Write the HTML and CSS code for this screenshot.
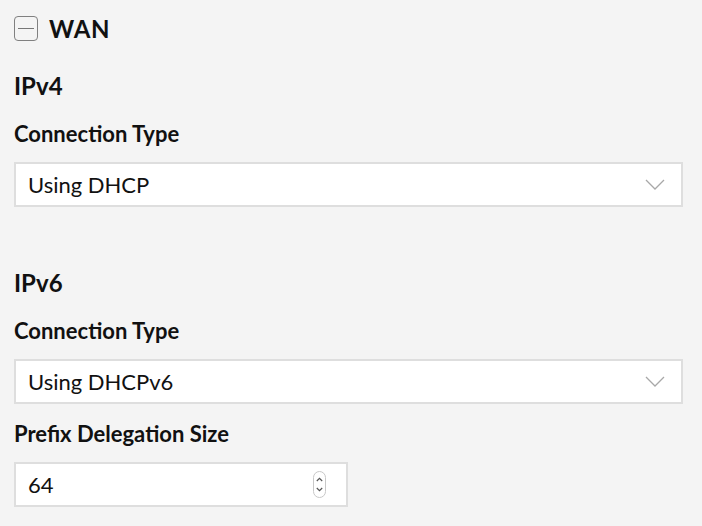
FILE: index.html
```html
<!DOCTYPE html>
<html>
<head>
<meta charset="utf-8">
<link rel="stylesheet" href="styles.css">
</head>
<body>
<div class="panel">
  <div class="header">
    <span class="toggle"><span class="minus"></span></span>
    <span class="title">WAN</span>
  </div>
  <h3 class="section first">IPv4</h3>
  <div class="label">Connection Type</div>
  <div class="select">
    <span>Using DHCP</span>
    <svg class="chev" width="20" height="11" viewBox="0 0 20 11"><path d="M1 1 L10 10 L19 1" fill="none" stroke="#a8a8a8" stroke-width="1.3"/></svg>
  </div>
  <h3 class="section second">IPv6</h3>
  <div class="label">Connection Type</div>
  <div class="select">
    <span>Using DHCPv6</span>
    <svg class="chev" width="20" height="11" viewBox="0 0 20 11"><path d="M1 1 L10 10 L19 1" fill="none" stroke="#a8a8a8" stroke-width="1.3"/></svg>
  </div>
  <div class="label prefix">Prefix Delegation Size</div>
  <div class="number">
    <span>64</span>
    <span class="spin">
      <svg width="13" height="27" viewBox="0 0 13 27"><rect x="0.5" y="0.5" width="12" height="26" rx="6" fill="#fff" stroke="#c8c8c8"/><path d="M3.8 10 L6.5 7.3 L9.2 10" fill="none" stroke="#555" stroke-width="1.2"/><path d="M3.8 17 L6.5 19.7 L9.2 17" fill="none" stroke="#555" stroke-width="1.2"/></svg>
    </span>
  </div>
</div>
</body>
</html>
```
FILE: styles.css
```css
html, body {
  margin: 0;
  padding: 0;
  background: #f4f4f4;
}
body {
  font-family: Lato, "Open Sans", sans-serif;
  color: #111;
}
.panel {
  padding: 16px 19px 0 14px;
}
.header {
  display: flex;
  align-items: center;
  height: 25px;
}
.toggle {
  box-sizing: border-box;
  width: 24px;
  height: 25px;
  border: 1.5px solid #808080;
  border-radius: 4px;
  display: flex;
  align-items: center;
  justify-content: center;
}
.minus {
  width: 16px;
  height: 1.5px;
  background: #777;
}
.title {
  margin-left: 11px;
  font-size: 24px;
  font-weight: 700;
  letter-spacing: 0.6px;
  line-height: 25px;
}
.section {
  margin: 0;
  font-size: 24px;
  font-weight: 700;
  line-height: 28px;
}
.section.first {
  margin-top: 31px;
}
.section.second {
  margin-top: 62px;
}
.label {
  font-size: 22px;
  font-weight: 700;
  line-height: 26px;
  margin-top: 21px;
}
.label.prefix {
  margin-top: 17px;
}
.select, .number {
  box-sizing: border-box;
  height: 45px;
  margin-top: 15px;
  background: #fff;
  border: 2px solid #dedede;
  display: flex;
  align-items: center;
  justify-content: space-between;
  padding: 0 16px 0 12px;
  font-size: 22px;
  line-height: 26px;
}
.chev {
  display: block;
}
.number {
  width: 334px;
  padding-right: 20px;
}
.spin {
  display: block;
  height: 27px;
}
.spin svg {
  display: block;
}
```
